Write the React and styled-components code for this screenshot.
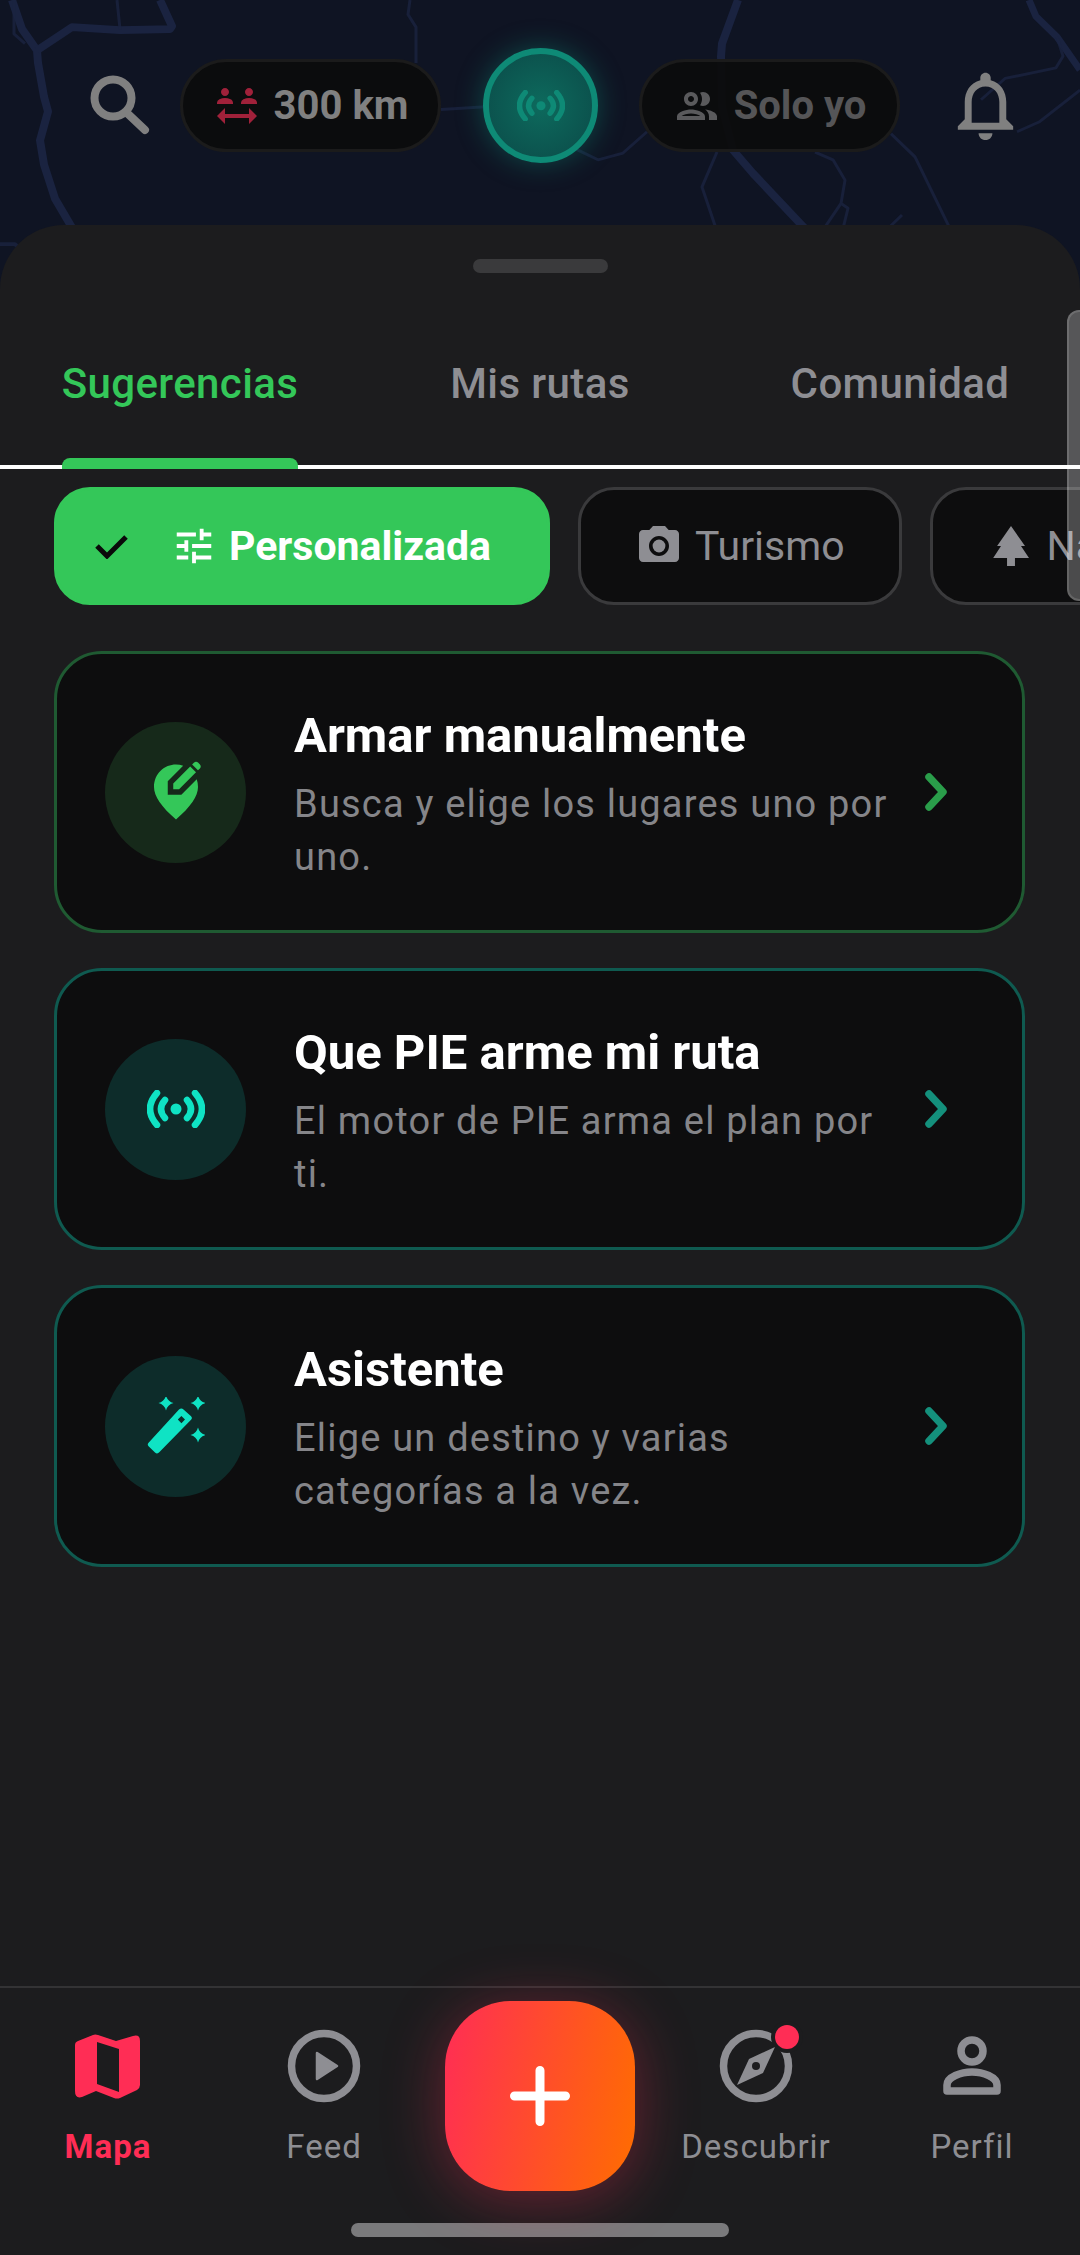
import React from "react";
import styled, { createGlobalStyle } from "styled-components";
import {
  MdTune,
  MdPhotoCamera,
  MdPark,
  MdEditLocationAlt,
  MdSocialDistance,
  MdOutlineGroup,
  MdOutlineNotifications,
} from "react-icons/md";

const GlobalStyle = createGlobalStyle`
  html, body {
    margin: 0;
    padding: 0;
    background: #1c1c1e;
    font-family: Roboto, "Liberation Sans", sans-serif;
  }
`;

const Screen = styled.div`
  position: relative;
  width: 1080px;
  height: 2255px;
  display: flex;
  flex-direction: column;
  overflow: hidden;
  background: #0f1423;
`;

const MapLayer = styled.svg`
  position: absolute;
  top: 0;
  left: 0;
  width: 1080px;
  height: 277px;
`;

const Toolbar = styled.div`
  position: relative;
  height: 225px;
  flex-shrink: 0;
  box-sizing: border-box;
  padding: 48px 10px 62px 72px;
  display: flex;
  align-items: center;
`;

const SearchSlot = styled.div`
  width: 108px;
  flex-shrink: 0;
  display: flex;
  padding-left: 16px;
  box-sizing: border-box;
`;

const BellSlot = styled.div`
  flex: 1;
  display: flex;
  justify-content: center;
  color: #808080;
`;

const Pill = styled.div`
  width: 261px;
  height: 93px;
  flex-shrink: 0;
  box-sizing: border-box;
  border-radius: 47px;
  border: 3px solid #1b1b1b;
  background: rgba(12, 12, 12, 0.94);
  display: flex;
  align-items: center;
  justify-content: center;
  gap: 13px;
  font-size: 40px;
  font-weight: 700;
  color: ${(p) => p.$text};
  svg {
    color: ${(p) => p.$icon};
  }
`;

const PulseButton = styled.div`
  width: 115px;
  height: 115px;
  flex-shrink: 0;
  margin: 0 41px 0 42px;
  box-sizing: border-box;
  border-radius: 50%;
  border: 6px solid #0e8a76;
  background: radial-gradient(circle, #0d6a5d 0%, #0b4a48 100%);
  box-shadow: 0 0 28px rgba(14, 138, 118, 0.45);
  display: flex;
  align-items: center;
  justify-content: center;
  color: #0e8a76;
`;

const Sheet = styled.div`
  position: relative;
  flex: 1;
  display: flex;
  flex-direction: column;
  border-radius: 64px 64px 0 0;
  background: #1c1c1e;
`;

const Handle = styled.div`
  width: 135px;
  height: 14px;
  margin: 34px auto 0;
  border-radius: 7px;
  background: #3a3a3c;
`;

const TabList = styled.div`
  display: grid;
  grid-template-columns: repeat(3, 1fr);
  height: 196px;
  box-sizing: border-box;
  border-bottom: 4px solid #fff;
`;

const Tab = styled.div`
  display: flex;
  justify-content: center;
`;

const TabLabel = styled.div`
  position: relative;
  box-sizing: border-box;
  height: 192px;
  padding-top: 28px;
  display: flex;
  align-items: center;
  font-size: 42px;
  letter-spacing: 0.4px;
  font-weight: 500;
  color: ${(p) => (p.$active ? "#34c759" : "#8e8e93")};
  &::after {
    content: "";
    display: ${(p) => (p.$active ? "block" : "none")};
    position: absolute;
    left: 0;
    right: 0;
    bottom: -4px;
    height: 11px;
    border-radius: 8px 8px 0 0;
    background: #34c759;
  }
`;

const ChipRow = styled.div`
  display: flex;
  gap: 28px;
  margin-top: 18px;
  padding-left: 54px;
  overflow: hidden;
`;

const Chip = styled.div`
  flex-shrink: 0;
  height: 118px;
  box-sizing: border-box;
  padding: 0 ${(p) => (p.$active ? "56px 0 38px" : "54px 0 54px")};
  border-radius: 36px;
  border: 3px solid ${(p) => (p.$active ? "#34c759" : "#3a3a3c")};
  background: ${(p) => (p.$active ? "#34c759" : "#0d0d0e")};
  color: ${(p) => (p.$active ? "#fff" : "#8e8e93")};
  display: flex;
  align-items: center;
  gap: 12px;
  font-size: 41px;
  font-weight: ${(p) => (p.$active ? 700 : 400)};
`;

const ChipCheck = styled.svg`
  width: 33px;
  height: 25px;
  margin-right: 31px;
  color: #0a0a0a;
`;

const CardList = styled.div`
  display: flex;
  flex-direction: column;
  gap: 35px;
  margin-top: 46px;
  padding: 0 55px 0 54px;
`;

const Card = styled.div`
  height: 282px;
  box-sizing: border-box;
  padding: 0 75px 0 48px;
  border-radius: 48px;
  border: 3px solid ${(p) => p.$border};
  background: #0d0d0e;
  display: flex;
  align-items: center;
`;

const CardIcon = styled.div`
  width: 141px;
  height: 141px;
  flex-shrink: 0;
  border-radius: 50%;
  background: ${(p) => p.$bg};
  color: ${(p) => p.$color};
  display: flex;
  align-items: center;
  justify-content: center;
`;

const CardBody = styled.div`
  flex: 1;
  margin: 0 19px 0 48px;
  padding-top: 5px;
`;

const CardTitle = styled.div`
  font-size: 49px;
  line-height: 60px;
  font-weight: 700;
  color: #fff;
`;

const CardText = styled.div`
  margin-top: 12px;
  font-size: 38px;
  line-height: 53px;
  letter-spacing: 1.2px;
  color: #858589;
`;

const Chevron = styled.svg`
  flex-shrink: 0;
  width: 22px;
  height: 38px;
  color: ${(p) => p.$color};
`;

const Nav = styled.div`
  flex-shrink: 0;
  margin-top: auto;
  border-top: 2px solid #333335;
  background: #1c1c1e;
`;

const NavGrid = styled.div`
  display: grid;
  grid-template-columns: repeat(5, 216px);
`;

const NavItem = styled.div`
  display: flex;
  flex-direction: column;
  align-items: center;
  padding-top: 39px;
  color: ${(p) => (p.$active ? "#ff2d55" : "#8e8e93")};
`;

const NavIcon = styled.div`
  position: relative;
  height: 78px;
  display: flex;
  align-items: center;
  justify-content: center;
`;

const NavLabel = styled.div`
  margin-top: 22px;
  font-size: 33px;
  line-height: 40px;
  letter-spacing: 1px;
  font-weight: ${(p) => (p.$active ? 700 : 400)};
`;

const Badge = styled.span`
  position: absolute;
  top: -2px;
  right: -6px;
  width: 24px;
  height: 24px;
  border-radius: 50%;
  background: #ff2d55;
  box-shadow: 0 0 0 4px #1c1c1e;
`;

const FabCell = styled.div`
  display: flex;
  justify-content: center;
  padding-top: 13px;
`;

const Fab = styled.div`
  width: 190px;
  height: 190px;
  border-radius: 66px;
  background: linear-gradient(100deg, #ff2d55 0%, #ff6d00 100%);
  box-shadow: 0 8px 60px rgba(255, 45, 85, 0.35);
  display: flex;
  align-items: center;
  justify-content: center;
`;

const HomeBar = styled.div`
  width: 378px;
  height: 14px;
  margin: 32px auto 18px;
  border-radius: 7px;
  background: #7a7a7c;
`;

const ScrollThumb = styled.div`
  position: absolute;
  top: 310px;
  right: 0;
  width: 13px;
  height: 291px;
  box-sizing: border-box;
  border: 2px solid rgba(255, 255, 255, 0.14);
  border-right: none;
  border-radius: 12px 0 0 12px;
  background: rgba(255, 255, 255, 0.26);
`;

const SensorIcon = ({ width }) => (
  <svg width={width} viewBox="0 0 58 38" fill="none" stroke="currentColor" strokeWidth="6.5" strokeLinecap="round">
    <path d="M10 3Q-4 19 10 35" />
    <path d="M18 10Q10 19 18 28" />
    <path d="M48 3Q62 19 48 35" />
    <path d="M40 10Q48 19 40 28" />
    <circle cx="29" cy="19" r="5.5" fill="currentColor" stroke="none" />
  </svg>
);

const star = (x, y) =>
  `M${x} ${y - 7.5}Q${x + 1.5} ${y - 1.5} ${x + 7.5} ${y}Q${x + 1.5} ${y + 1.5} ${x} ${y + 7.5}Q${x - 1.5} ${y + 1.5} ${x - 7.5} ${y}Q${x - 1.5} ${y - 1.5} ${x} ${y - 7.5}Z`;

const WandIcon = () => (
  <svg width="58" height="58" viewBox="0 0 58 58" fill="currentColor" fillRule="evenodd">
    <path d={star(19, 6)} />
    <path d={star(51, 6)} />
    <path d={star(51, 38)} />
    <path d="M32 12.5Q34.4 10.5 36.5 12.5L43.8 19Q46 21 43.8 23L12.5 55Q10.3 57.5 8 55.5L1.8 49.5Q-0.3 47.4 1.8 45.4ZM34.4 19L30.8 22.6L34.4 26.2L38 22.6Z" />
  </svg>
);

const SearchIcon = () => (
  <svg width="64" height="68" viewBox="0 0 64 68" fill="none" stroke="#808080" strokeWidth="8" strokeLinecap="round">
    <circle cx="25" cy="26" r="18.5" />
    <path d="M39 41L57 58" />
  </svg>
);

const MapIcon = () => (
  <svg width="66" height="66" viewBox="0 0 66 66" fill="currentColor" fillRule="evenodd">
    <path d="M3 8L18 2Q20 1 23 2L41 8L58 3Q65 1 65 8L65 52Q65 55 62 57L45 65Q42 66 39 65L21 58L7 64Q0 66 0 58L0 12Q0 9 3 8ZM22 9L22 51L44 59L44 16Z" />
  </svg>
);

const PlayIcon = () => (
  <svg width="74" height="74" viewBox="0 0 74 74" fill="none" stroke="currentColor" strokeWidth="7.5">
    <circle cx="37" cy="37" r="32.5" />
    <path d="M30 24L50 37L30 50Z" fill="currentColor" strokeWidth="2.5" strokeLinejoin="round" />
  </svg>
);

const CompassIcon = () => (
  <svg width="74" height="74" viewBox="0 0 74 74" fill="none" stroke="currentColor" strokeWidth="7.5">
    <circle cx="37" cy="37" r="32.5" />
    <path d="M56 18L44 44L18 56L30 30Z" fill="currentColor" stroke="none" />
    <circle cx="37" cy="37" r="4" fill="#1c1c1e" stroke="none" />
  </svg>
);

const PersonIcon = () => (
  <svg width="58" height="60" viewBox="0 0 58 60" fill="none" stroke="currentColor" strokeWidth="7.5" strokeLinejoin="round">
    <circle cx="29" cy="15" r="11" />
    <path d="M4 55V49C4 41 18 36 29 36C40 36 54 41 54 49V55Z" />
  </svg>
);

const PlusIcon = () => (
  <svg width="60" height="60" viewBox="0 0 60 60" stroke="#fff" strokeWidth="9" strokeLinecap="round">
    <path d="M30 4.5V55.5M4.5 30H55.5" />
  </svg>
);

const ROADS = [
  { w: 8, o: 1, d: "M12 0L22 30L37 52L38 65L44 100L48 115L40 145L44 170L55 205L72 235" },
  { w: 8, o: 1, d: "M37 52L72 28L120 31L170 30L172 27L160 0" },
  { w: 3, o: 0.8, d: "M117 0L120 30" },
  { w: 3, o: 0.8, d: "M14 0L14 35L25 45" },
  { w: 4, o: 0.8, d: "M0 252L15 252L25 262" },
  { w: 3, o: 0.8, d: "M410 0L408 15L416 28L416 65" },
  { w: 3, o: 0.8, d: "M441 113L490 110L530 118L578 155L598 165L623 158L647 136" },
  { w: 8, o: 1, d: "M738 0L722 45L721 58L722 110L733 155L753 179L805 236" },
  { w: 3, o: 0.8, d: "M717 157L702 193L716 236" },
  { w: 3, o: 0.8, d: "M815 157L833 165L845 186L841 210L824 236M841 210L848 215L843 236" },
  { w: 3, o: 0.8, d: "M891 138L915 162L950 236" },
  { w: 3, o: 0.8, d: "M902 222L888 236" },
  { w: 7, o: 1, d: "M1029 0L1036 17L1057 38L1080 72" },
  { w: 3, o: 0.8, d: "M1057 38L1063 58L1056 70L1005 81L981 103" },
  { w: 3, o: 0.8, d: "M1080 93L1039 126L1017 136" },
];

const CARDS = [
  {
    title: "Armar manualmente",
    text: "Busca y elige los lugares uno por uno.",
    border: "#1f5a32",
    bg: "#16291a",
    color: "#34c759",
    chevron: "#2a9d4a",
    icon: <MdEditLocationAlt size={66} />,
  },
  {
    title: "Que PIE arme mi ruta",
    text: "El motor de PIE arma el plan por ti.",
    border: "#0f5a50",
    bg: "#0d2c2a",
    color: "#0fe3c4",
    chevron: "#14907c",
    icon: <SensorIcon width={58} />,
  },
  {
    title: "Asistente",
    text: "Elige un destino y varias categorías a la vez.",
    border: "#0f5a50",
    bg: "#0d2c2a",
    color: "#0fe3c4",
    chevron: "#14907c",
    icon: <WandIcon />,
  },
];

export default function App() {
  return (
    <>
      <GlobalStyle />
      <Screen>
        <MapLayer viewBox="0 0 1080 286" preserveAspectRatio="none" fill="none" stroke="#1a2340" strokeLinejoin="round">
          {ROADS.map((road) => (
            <path key={road.d} d={road.d} strokeWidth={road.w} opacity={road.o} />
          ))}
        </MapLayer>

        <Toolbar>
          <SearchSlot>
            <SearchIcon />
          </SearchSlot>
          <Pill $text="#808080" $icon="#a0213a">
            <MdSocialDistance size={48} />
            300 km
          </Pill>
          <PulseButton>
            <SensorIcon width={48} />
          </PulseButton>
          <Pill $text="#555557" $icon="#5a5a5c">
            <MdOutlineGroup size={48} />
            Solo yo
          </Pill>
          <BellSlot>
            <MdOutlineNotifications size={83} />
          </BellSlot>
        </Toolbar>

        <Sheet>
          <Handle />
          <TabList>
            <Tab>
              <TabLabel $active>Sugerencias</TabLabel>
            </Tab>
            <Tab>
              <TabLabel>Mis rutas</TabLabel>
            </Tab>
            <Tab>
              <TabLabel>Comunidad</TabLabel>
            </Tab>
          </TabList>

          <ChipRow>
            <Chip $active>
              <ChipCheck viewBox="0 0 33 25" fill="none" stroke="currentColor" strokeWidth="5">
                <path d="M2 12L12 22L31 3" />
              </ChipCheck>
              <MdTune size={46} />
              Personalizada
            </Chip>
            <Chip>
              <MdPhotoCamera size={48} />
              Turismo
            </Chip>
            <Chip>
              <MdPark size={48} />
              Naturaleza
            </Chip>
          </ChipRow>

          <CardList>
            {CARDS.map((card) => (
              <Card key={card.title} $border={card.border}>
                <CardIcon $bg={card.bg} $color={card.color}>
                  {card.icon}
                </CardIcon>
                <CardBody>
                  <CardTitle>{card.title}</CardTitle>
                  <CardText>{card.text}</CardText>
                </CardBody>
                <Chevron $color={card.chevron} viewBox="0 0 22 38" fill="none" stroke="currentColor" strokeWidth="7.5" strokeLinecap="round" strokeLinejoin="round">
                  <path d="M4 4L18 19L4 34" />
                </Chevron>
              </Card>
            ))}
          </CardList>

          <Nav>
            <NavGrid>
              <NavItem $active>
                <NavIcon>
                  <MapIcon />
                </NavIcon>
                <NavLabel $active>Mapa</NavLabel>
              </NavItem>
              <NavItem>
                <NavIcon>
                  <PlayIcon />
                </NavIcon>
                <NavLabel>Feed</NavLabel>
              </NavItem>
              <FabCell>
                <Fab>
                  <PlusIcon />
                </Fab>
              </FabCell>
              <NavItem>
                <NavIcon>
                  <CompassIcon />
                  <Badge />
                </NavIcon>
                <NavLabel>Descubrir</NavLabel>
              </NavItem>
              <NavItem>
                <NavIcon>
                  <PersonIcon />
                </NavIcon>
                <NavLabel>Perfil</NavLabel>
              </NavItem>
            </NavGrid>
            <HomeBar />
          </Nav>
        </Sheet>

        <ScrollThumb />
      </Screen>
    </>
  );
}
